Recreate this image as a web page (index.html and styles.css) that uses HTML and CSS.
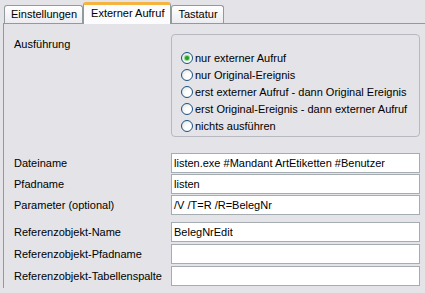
FILE: index.html
```html
<!DOCTYPE html>
<html lang="de">

<head>
  <meta charset="UTF-8">
  <meta name="viewport" content="width=device-width, initial-scale=1.0">
  <title>Externer Aufruf</title>
  <link rel="stylesheet" href="styles.css">
</head>

<body>

  <div class="tabs">
    <div class="tab">Einstellungen</div>
    <div class="tab active">Externer Aufruf</div>
    <div class="tab">Tastatur</div>
  </div>

  <div class="panel">
    <div class="label exec-label">Ausführung</div>
    <div class="group">
      <label class="option"><span class="radio checked"></span>nur externer Aufruf</label>
      <label class="option"><span class="radio"></span>nur Original-Ereignis</label>
      <label class="option"><span class="radio"></span>erst externer Aufruf - dann Original Ereignis</label>
      <label class="option"><span class="radio"></span>erst Original-Ereignis - dann externer Aufruf</label>
      <label class="option"><span class="radio"></span>nichts ausführen</label>
    </div>

    <div class="fields">
      <div class="row">
        <div class="label">Dateiname</div>
        <div class="field">listen.exe #Mandant ArtEtiketten #Benutzer</div>
      </div>
      <div class="row">
        <div class="label">Pfadname</div>
        <div class="field">listen</div>
      </div>
      <div class="row">
        <div class="label">Parameter (optional)</div>
        <div class="field">/V /T=R /R=BelegNr</div>
      </div>
      <div class="row ref first">
        <div class="label">Referenzobjekt-Name</div>
        <div class="field">BelegNrEdit</div>
      </div>
      <div class="row ref">
        <div class="label">Referenzobjekt-Pfadname</div>
        <div class="field"></div>
      </div>
      <div class="row ref">
        <div class="label">Referenzobjekt-Tabellenspalte</div>
        <div class="field"></div>
      </div>
    </div>
  </div>

</body>

</html>
```

FILE: styles.css
```css
* {
  box-sizing: border-box;
}

body {
  margin: 0;
  padding: 0;
  height: 293px;
  overflow: hidden;
  background-color: #e3e3e8;
  font-family: "Liberation Sans", Arial, sans-serif;
  font-size: 11px;
  color: #000;
}

.tabs {
  height: 23px;
  padding-left: 4px;
  display: flex;
  align-items: flex-end;
}

.tabs .tab {
  height: 18px;
  padding: 0 5px 0 6px;
  line-height: 17px;
  border: 1px solid #919b9c;
  border-bottom: none;
  border-radius: 3px 3px 0 0;
  background: linear-gradient(#ffffff, #ececf0);
}

.tabs .tab.active {
  height: 22px;
  margin-bottom: -1px;
  padding: 0 6px 0 7px;
  line-height: 16px;
  border-top: 3px solid #f5b440;
  background: #fcfcfe;
  position: relative;
  z-index: 2;
}

.panel {
  border-top: 1px solid #919b9c;
  border-left: 1px solid #919b9c;
  margin-left: 3px;
  padding: 10px 0 0 10px;
  display: grid;
  grid-template-columns: 157px 249px;
  align-items: start;
}

.exec-label {
  padding-top: 4px;
}

.group {
  height: 103px;
  padding: 14px 0 2px 9px;
  border: 1px solid #b8b8c0;
  border-radius: 4px;
}

.group .option {
  height: 17px;
  display: flex;
  align-items: center;
  gap: 2px;
}

.group .radio {
  width: 12px;
  height: 12px;
  border: 1px solid #1c5180;
  border-radius: 50%;
  background: radial-gradient(circle at 65% 65%, #ffffff 30%, #dcdcd7);
  display: flex;
  justify-content: center;
  align-items: center;
}

.group .radio.checked::after {
  content: "";
  width: 4px;
  height: 4px;
  border-radius: 50%;
  background-color: #21a121;
  box-shadow: 0 0 1px 1px #7fd27f;
}

.fields {
  grid-column: 1 / 3;
  margin: 16px 0 0 -10px;
  padding-left: 10px;
}

.fields .row {
  height: 21px;
  display: grid;
  grid-template-columns: 157px 249px;
  align-items: start;
}

.fields .row.ref {
  height: 22px;
}

.fields .row.ref.first {
  margin-top: 6px;
}

.fields .label {
  line-height: 20px;
}

.fields .field {
  height: 20px;
  padding-left: 2px;
  line-height: 18px;
  border: 1px solid #a5acb2;
  background-color: #fff;
  white-space: nowrap;
  overflow: hidden;
}
```
